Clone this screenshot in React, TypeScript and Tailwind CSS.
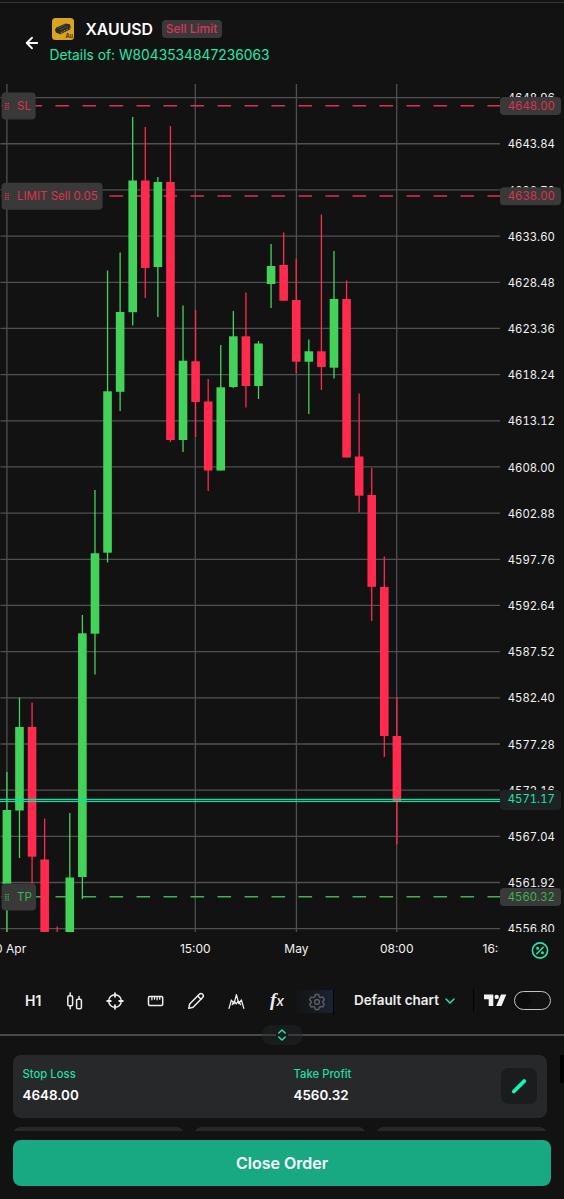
import type {FC, ReactNode} from 'react';
import {ArrowLeft, ChevronDown} from 'lucide-react';

type Candle = {up: boolean; high: number; top: number; bottom: number; low: number};

const GREEN = '#43d35b';
const RED = '#ff2a4d';

const CHART_TOP = 80;
const PLOT_TOP = 84;
const PLOT_BOTTOM = 932;
const PLOT_RIGHT = 500;
const FIRST_CANDLE = 6.9;
const CANDLE_STEP = 12.58;
const CANDLE_WIDTH = 8.6;
const FIRST_ROW = 97.6;
const ROW_STEP = 46.17;

const prices = [
  '4648.96', '4643.84', '4638.72', '4633.60', '4628.48', '4623.36', '4618.24', '4613.12', '4608.00', '4602.88',
  '4597.76', '4592.64', '4587.52', '4582.40', '4577.28', '4572.16', '4567.04', '4561.92', '4556.80'
];

const times = [
  {label: '30 Apr', x: 6.9, line: true},
  {label: '15:00', x: 195.3, line: true},
  {label: 'May', x: 296.4, line: true},
  {label: '08:00', x: 396.7, line: true},
  {label: '16:00', x: 498, line: false}
];

const c = (up: boolean, high: number, top: number, bottom: number, low: number): Candle => ({up, high, top, bottom, low});

const candles: Candle[] = [
  c(true, 772, 810, 884, 932),
  c(true, 697.5, 727, 810.5, 858),
  c(false, 702.5, 727, 856.7, 888),
  c(false, 818.5, 859.5, 940, 940),
  c(false, 926.5, 936, 940, 940),
  c(true, 813, 877.5, 940, 940),
  c(true, 615, 633.3, 877, 899),
  c(true, 490, 553.3, 633.7, 674.5),
  c(true, 270.5, 391.3, 552.7, 562.5),
  c(true, 252.5, 312, 391.8, 411),
  c(true, 117, 180.5, 312.2, 325.5),
  c(false, 127, 180.5, 268, 298),
  c(true, 177, 182, 267, 317),
  c(false, 126, 182, 440, 442),
  c(true, 305.5, 360.7, 440, 452),
  c(false, 310, 361.3, 402, 437),
  c(false, 379, 401.5, 470.5, 491),
  c(true, 345, 387.3, 470.5, 470.5),
  c(true, 311, 336.3, 387, 388),
  c(false, 292.5, 336.3, 386, 407.5),
  c(true, 341, 343.5, 386, 399),
  c(true, 244, 266, 284, 308),
  c(false, 232.5, 265, 300.7, 300.7),
  c(false, 259, 300, 361.7, 373),
  c(true, 339.5, 351.3, 361.7, 414),
  c(false, 214.5, 351.3, 367, 390),
  c(true, 251, 299, 367.7, 378.5),
  c(false, 280.5, 299, 457.5, 457.5),
  c(false, 393.5, 456.5, 495.7, 512.5),
  c(false, 468, 495, 586.8, 621),
  c(false, 556.5, 587, 736, 757),
  c(false, 697, 736, 801, 844.5)
];

const levels = [
  {label: 'SL', price: '4648.00', y: 105.8, width: 34, color: '#dc3350'},
  {label: 'LIMIT Sell 0.05', price: '4638.00', y: 196, width: 101, color: '#dc3350'},
  {label: 'TP', price: '4560.32', y: 896.7, width: 34.5, color: '#3db351'}
];

const Chart: FC = () => (
  <svg
    width="564"
    height="886"
    viewBox={`0 ${CHART_TOP} 564 886`}
    className="block shrink-0 text-[11.3px]"
  >
    <defs>
      <clipPath id="plot">
        <rect x="0" y={PLOT_TOP} width={PLOT_RIGHT} height={PLOT_BOTTOM - PLOT_TOP} />
      </clipPath>
      <clipPath id="priceAxis">
        <rect x={PLOT_RIGHT} y={PLOT_TOP} width="64" height={PLOT_BOTTOM - PLOT_TOP} />
      </clipPath>
      <clipPath id="timeAxis">
        <rect x="0" y={PLOT_BOTTOM} width={PLOT_RIGHT - 1.5} height="34" />
      </clipPath>
    </defs>

    <g clipPath="url(#plot)">
      {prices.map((p, i) => (
        <line key={p} x1="0.5" x2={PLOT_RIGHT} y1={FIRST_ROW + i * ROW_STEP} y2={FIRST_ROW + i * ROW_STEP} stroke="#505052" strokeWidth="1.3" />
      ))}
      {times.filter(t => t.line).map(t => (
        <line key={t.label} x1={t.x} x2={t.x} y1={PLOT_TOP} y2={PLOT_BOTTOM} stroke="#505052" strokeWidth="1.3" />
      ))}
      {levels.map(l => (
        <line key={l.label} x1="1.5" x2={PLOT_RIGHT} y1={l.y} y2={l.y} stroke={l.color} strokeWidth="1.4" strokeDasharray="13.6 13.4" />
      ))}
      {candles.map((k, i) => {
        const x = FIRST_CANDLE + i * CANDLE_STEP;
        const color = k.up ? GREEN : RED;
        return (
          <g key={i} fill={color}>
            <rect x={x - 0.65} y={k.high} width="1.3" height={k.low - k.high} />
            <rect x={x - CANDLE_WIDTH / 2} y={k.top} width={CANDLE_WIDTH} height={k.bottom - k.top} />
          </g>
        );
      })}
      <rect x="0" y="798" width={PLOT_RIGHT} height="4.500" fill="#1bd99d" fillOpacity="0.25" />
      <line x1="0" x2={PLOT_RIGHT} y1="799.5" y2="799.5" stroke="#1bd99d" strokeWidth="1" />
      <line x1="0" x2={PLOT_RIGHT} y1="801.5" y2="801.5" stroke="#1bd99d" strokeWidth="1" />
    </g>

    <g clipPath="url(#priceAxis)" fill="#f2f2f2" className="tabular-nums">
      {prices.map((p, i) => (
        <text key={p} x="554.8" y={FIRST_ROW + i * ROW_STEP + 4.6} textAnchor="end">
          {p}
        </text>
      ))}
    </g>
    <g clipPath="url(#timeAxis)" fill="#f2f2f2" textAnchor="middle" className="text-[12px]">
      {times.map(t => (
        <text key={t.label} x={t.x} y="953.2">
          {t.label}
        </text>
      ))}
    </g>

    <rect x="500" y="790" width="61" height="20" rx="4" fill="#1d2224" />
    <text x="554.8" y="803.3" textAnchor="end" fill="#1fe3a5" className="tabular-nums">
      4571.17
    </text>

    {levels.map(l => (
      <g key={l.label} fill={l.color}>
        <rect x="1.6" y={l.y - 13.2} width={l.width} height="27" rx="4" fill="#3a393a" />
        {[0, 1, 2, 3].map(row => (
          <g key={row}>
            <rect x="5" y={l.y - 2.8 + row * 1.9} width="1.5" height="1" />
            <rect x="7.5" y={l.y - 2.8 + row * 1.9} width="1.5" height="1" />
          </g>
        ))}
        <text x="17" y={l.y + 4} className="text-[11.5px]">
          {l.label}
        </text>
        <rect x="500" y={l.y - 8.7} width="61" height="18" rx="4" fill="#3a393a" />
        <text x="554.8" y={l.y + 4.3} textAnchor="end" className="tabular-nums">
          {l.price}
        </text>
      </g>
    ))}

    <g fill="none" stroke="#1fe9ab" strokeWidth="1.6" strokeLinecap="round">
      <circle cx="540" cy="950.5" r="7.6" />
      <path d="M536.8 953.7 543.2 947.3" />
      <circle cx="537.6" cy="948.2" r="0.7" />
      <circle cx="542.5" cy="952.8" r="0.7" />
    </g>
  </svg>
);

const GoldLogo: FC = () => (
  <svg width="22" height="22" viewBox="0 0 22 22">
    <rect width="22" height="22" rx="3.5" fill="#d9a520" />
    <path d="M3 11.6 4.4 9.6 13.5 5.4 17.8 6.2 18.8 9.2 18 11.4 8.2 16.2 3.8 14.6z" fill="#2b2a28" />
    <path d="M5.4 10.2 13.4 6.6M7.6 12 16.4 7.8" stroke="#55534c" strokeWidth="0.9" />
    <path d="M8.7 14.6 18.3 9.8" stroke="#c99a22" strokeWidth="1" strokeDasharray="1.6 1.6" />
    <text x="13.4" y="20" fill="#4a3508" className="text-[5.5px] font-bold">
      Au
    </text>
  </svg>
);

const Header: FC = () => (
  <header className="flex h-[77px] shrink-0 items-start">
    <ArrowLeft className="mt-[31px] ml-[22.5px] h-[18px] w-[18px] text-white" strokeWidth={2.4} />
    <div className="ml-[9px] pt-[15px]">
      <div className="flex h-[22px] items-center pl-[2px]">
        <GoldLogo />
        <h1 className="mt-px ml-3 w-[76px] text-[15.8px] leading-[22px] font-semibold text-white">XAUUSD</h1>
        <span className="flex h-[18px] w-[60px] items-center justify-center rounded bg-[#3a393a] text-[12px] font-medium whitespace-nowrap text-[#d8355a]">
          Sell Limit
        </span>
      </div>
      <p className="mt-[5px] text-[13.8px] leading-[21px] whitespace-nowrap text-[#1fe9ab]">Details of: W8043534847236063</p>
    </div>
  </header>
);

const ToolIcon: FC<{children: ReactNode; className?: string}> = ({children, className = ''}) => (
  <button className={`flex h-[23px] w-[40.5px] shrink-0 items-center justify-center ${className}`}>
    <svg width="18" height="18" viewBox="0 0 18 18" fill="none" stroke="#ededed" strokeWidth="1.5" strokeLinejoin="round" strokeLinecap="round">
      {children}
    </svg>
  </button>
);

const Toolbar: FC = () => (
  <div className="flex h-[58px] shrink-0 items-start pt-[22px] text-[14px] font-semibold text-[#ededed]">
    <button className="h-[23px] w-[54.5px] shrink-0 pl-[25px] text-left leading-[22px]">H1</button>
    <ToolIcon>
      <rect x="1.8" y="3.8" width="4.8" height="10" rx="1.4" />
      <rect x="10.6" y="7.2" width="4.8" height="9.6" rx="1.4" />
      <path d="M4.2 1v2.8M4.2 13.8v3M13 4.4v2.8" />
    </ToolIcon>
    <ToolIcon>
      <circle cx="9" cy="9" r="6.3" />
      <path d="M9 1.2v3.6M9 13.2v3.6M1.2 9h3.6M13.2 9h3.6" strokeWidth="1.8" />
    </ToolIcon>
    <ToolIcon>
      <rect x="1.5" y="4.6" width="14.2" height="8.8" rx="1.2" />
      <path d="M4.9 4.8v3M7.5 4.8v2.4M10.1 4.8v3M12.7 4.8v2.4" strokeWidth="1.3" />
    </ToolIcon>
    <ToolIcon>
      <path d="M1.8 16.4 2.7 12 12.3 2.3a2.2 2.2 0 0 1 3.3 3.2L6.1 15.2z" />
      <path d="M10.8 4 14 7.2" />
    </ToolIcon>
    <ToolIcon>
      <path strokeWidth="1.3" d="M1 16.4 3.4 8 6 11.8l2.4-9.200 2.4 9L13.400 8l2.4 8.400M4.200 12.600 6.400 9l1.800 3 2-3.200 2.400 3.800" />
    </ToolIcon>
    <button className="h-[23px] w-[36px] shrink-0 pl-[4px] text-center text-[14px] leading-[20px] font-medium italic">
      <span className="font-['Liberation_Serif',serif] text-[19px] font-bold">f</span>x
    </button>
    <div className="mt-px flex h-[23px] w-[41px] shrink-0 justify-end border-r border-black bg-gradient-to-r from-[#121212] to-[#1b2230]">
      <ToolIcon className="-mr-[4px]">
        <g stroke="#595c61">
          <path d="M7.3 1.6h3.4l.5 2.2 1.4.8 2.1-.7 1.7 2.9-1.6 1.5v1.5l1.6 1.4-1.7 2.9-2.1-.6-1.4.8-.5 2.1H7.3l-.5-2.1-1.4-.8-2.1.6-1.7-2.9 1.6-1.4V8.3L1.6 6.8l1.7-2.9 2.1.7 1.4-.8z" />
          <circle cx="9" cy="9" r="2.4" />
        </g>
      </ToolIcon>
    </div>
    <button className="ml-[20px] flex h-[23px] w-[120px] shrink-0 items-center border-r border-black text-[13.5px] leading-[22px] whitespace-nowrap">
      <span className="-mt-px w-[89px] text-left">Default chart</span>
      <ChevronDown className="h-[16px] w-[16px] -translate-x-px text-[#1fe9ab]" strokeWidth={2.2} />
    </button>
    <svg className="mt-[4px] ml-[10px] shrink-0" width="23" height="16" viewBox="0 0 23 16" fill="#f2f2f2">
      <path d="M0 1.6h9.3v11.3H4.7V6.3H0zM17 1.6h5.3l-4.8 11.3h-5.3z" />
      <circle cx="12.7" cy="3.9" r="2.2" />
    </svg>
    <button className="mt-[2px] ml-[6.5px] h-[19px] w-[37px] shrink-0 rounded-full border border-[#c4c4c4] p-px">
      <span className="block h-[15px] w-[15px] rounded-full bg-[#0c0c0c]" />
    </button>
  </div>
);

const SplitHandle: FC = () => (
  <div className="flex h-[20px] shrink-0 items-center">
    <div className="h-[2px] flex-1 bg-[#4a4a4a]" />
    <div className="flex h-[20px] w-[41px] items-center rounded-[9px] bg-[#191b1c]">
      <div className="h-[2px] flex-1 bg-[#3a3b3b]" />
      <svg width="12" height="14" viewBox="0 0 12 14" fill="none" stroke="#1fe9ab" strokeWidth="1.5" strokeLinecap="round" strokeLinejoin="round">
        <path d="M2.8 5 6 2l3.2 3M2.8 9 6 12l3.2-3" />
      </svg>
      <div className="h-[2px] flex-1 bg-[#3a3b3b]" />
    </div>
    <div className="h-[2px] flex-1 bg-[#4a4a4a]" />
  </div>
);

const Field: FC<{title: string; value: string}> = ({title, value}) => (
  <div className="w-[271px] shrink-0">
    <div className="text-[11.3px] leading-[19px] font-medium text-[#1fdda3]">{title}</div>
    <div className="text-[13.4px] leading-[22px] font-semibold text-white">{value}</div>
  </div>
);

const OrderPanel: FC = () => (
  <section className="flex h-[86px] shrink-0 flex-col overflow-hidden pt-[10px]">
    <div className="flex items-start justify-between pl-[13px]">
      <div className="flex h-[63px] w-[534px] items-start rounded-lg bg-[#272829] pt-[10px] pl-[9.5px]">
        <Field title="Stop Loss" value="4648.00" />
        <Field title="Take Profit" value="4560.32" />
        <button className="mt-[3px] -ml-[63.5px] flex h-[36px] w-[36px] shrink-0 items-center justify-center rounded-lg bg-[#1b1c1d]">
          <svg width="16" height="16" viewBox="0 0 16 16" stroke="#14f7b4" strokeLinecap="round">
            <path d="M2.8 13.5 13.2 3.1" strokeWidth="3.8" />
          </svg>
        </button>
      </div>
      <div className="h-[28px] w-1 bg-black" />
    </div>
    <div className="mt-[9px] ml-[13px] grid w-[534px] grid-cols-3 gap-[10px]">
      {[0, 1, 2].map(i => (
        <div key={i} className="h-[60px] rounded-lg bg-[#272829]" />
      ))}
    </div>
  </section>
);

const App: FC = () => (
  <main className="flex h-[1199px] w-[564px] flex-col overflow-hidden bg-[#121212] font-['Inter',sans-serif]">
    <div className="mt-[2px] h-px shrink-0 bg-[#33363a]" />
    <Header />
    <Chart />
    <div className="h-px shrink-0" />
    <Toolbar />
    <SplitHandle />
    <OrderPanel />
    <button className="mt-[9px] ml-[13px] h-[46px] w-[538px] shrink-0 rounded-lg bg-[#18a982] text-[16px] font-semibold text-white">
      Close Order
    </button>
  </main>
);

export default App;
